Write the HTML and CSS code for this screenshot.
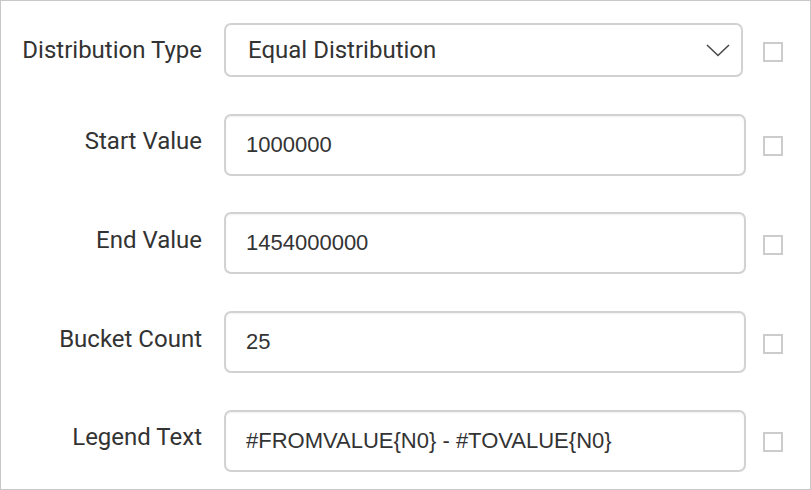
FILE: index.html
```html
<!DOCTYPE html>
<html lang="en">
<head>
<meta charset="utf-8">
<title>Distribution settings</title>
<link rel="stylesheet" href="styles.css">
</head>
<body>
<div class="panel">
  <div class="row">
    <label class="label">Distribution Type</label>
    <div class="select">
      <span class="select-text">Equal Distribution</span>
      <svg class="chevron" width="24" height="13" viewBox="0 0 24 13"><polyline points="1,1 12,11.5 23,1" fill="none" stroke="#4a4a4a" stroke-width="1.6"/></svg>
    </div>
    <span class="check"></span>
  </div>
  <div class="row row-input">
    <label class="label">Start Value</label>
    <input class="field" type="text" value="1000000">
    <span class="check"></span>
  </div>
  <div class="row row-input">
    <label class="label">End Value</label>
    <input class="field" type="text" value="1454000000">
    <span class="check"></span>
  </div>
  <div class="row row-input">
    <label class="label">Bucket Count</label>
    <input class="field" type="text" value="25">
    <span class="check"></span>
  </div>
  <div class="row row-input">
    <label class="label">Legend Text</label>
    <input class="field" type="text" value="#FROMVALUE{N0} - #TOVALUE{N0}">
    <span class="check"></span>
  </div>
</div>
</body>
</html>
```
FILE: styles.css
```css
html, body {
  margin: 0;
  padding: 0;
  background: #ffffff;
}

.panel {
  box-sizing: border-box;
  width: 811px;
  height: 490px;
  border: 1px solid #c8c8c8;
  padding-top: 22px;
  display: flex;
  flex-direction: column;
  gap: 36.7px;
}

.row {
  display: flex;
  align-items: center;
  height: 54px;
}

.row-input {
  height: 62px;
}

.label {
  width: 201px;
  margin-right: 22px;
  text-align: right;
  font-family: Roboto, "Liberation Sans", sans-serif;
  font-size: 24px;
  color: #333333;
  line-height: 28px;
}

.row-input .label {
  padding-bottom: 7px;
}

.select {
  box-sizing: border-box;
  width: 519px;
  height: 54px;
  margin-right: 3px;
  border: 2px solid #d2d2d2;
  border-radius: 7px;
  display: flex;
  align-items: center;
  justify-content: space-between;
  padding: 0 11px 0 22px;
  font-family: Roboto, "Liberation Sans", sans-serif;
  font-size: 24px;
  color: #333333;
}

.chevron {
  display: block;
  margin-top: 1px;
}

.field {
  box-sizing: border-box;
  width: 522px;
  height: 62px;
  margin: 0;
  border: 2px solid #d2d2d2;
  border-radius: 7px;
  padding: 0 20px 0 20px;
  font-family: "Liberation Sans", Arial, sans-serif;
  font-size: 22px;
  color: #333333;
  background: #ffffff;
  box-shadow: inset 0 1px 2px rgba(0, 0, 0, 0.06);
  outline: none;
}

.check {
  box-sizing: border-box;
  width: 20px;
  height: 20px;
  margin-left: 17px;
  margin-top: 3px;
  border: 2px solid #cccccc;
  background: #ffffff;
}
```
